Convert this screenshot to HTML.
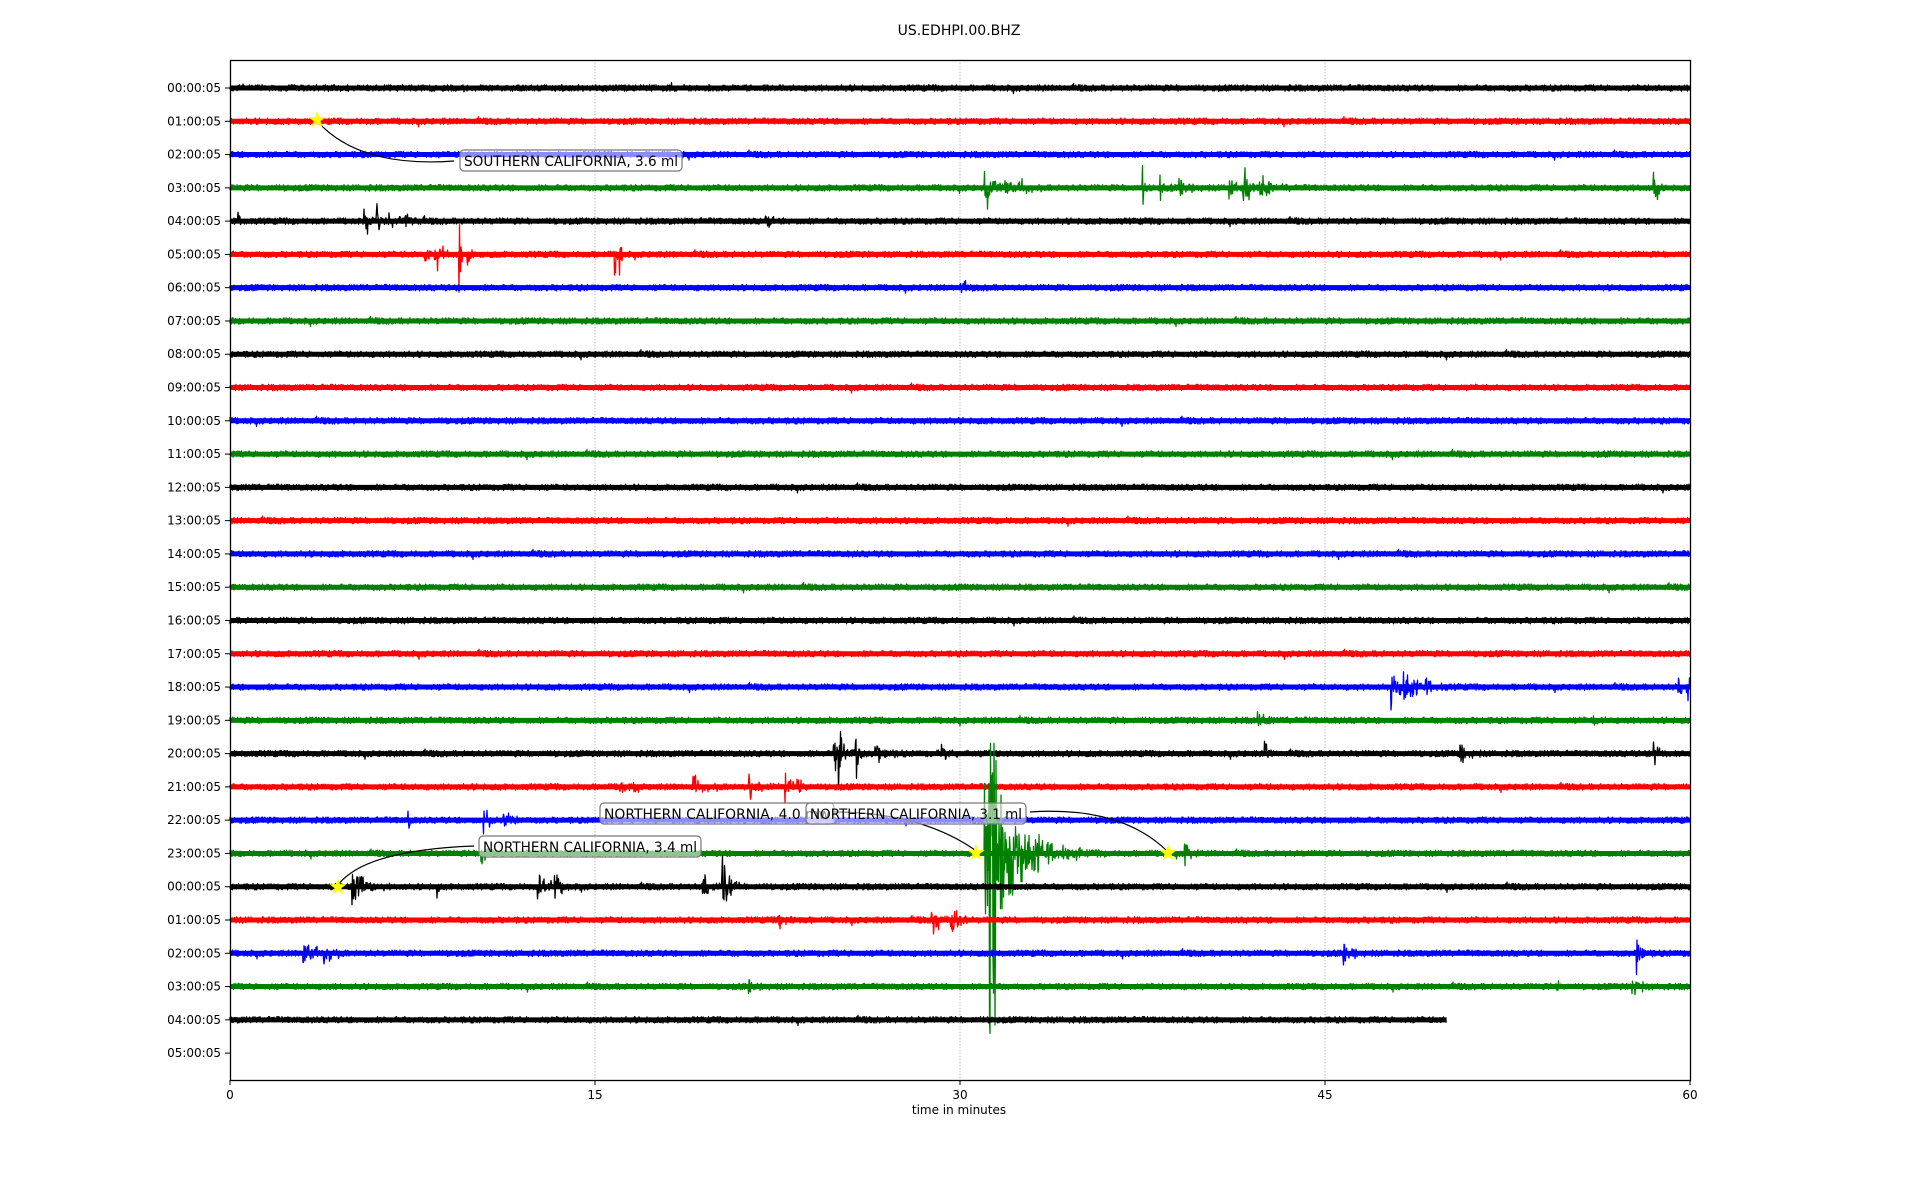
<!DOCTYPE html>
<html><head><meta charset="utf-8">
<style>
html,body{margin:0;padding:0;background:#fff;}
body{width:1920px;height:1200px;overflow:hidden;font-family:"DejaVu Sans","Liberation Sans",sans-serif;}
svg text{font-family:"DejaVu Sans","Liberation Sans",sans-serif;}
</style></head>
<body>
<svg id="s" width="1920" height="1200" xmlns="http://www.w3.org/2000/svg">
<rect width="1920" height="1200" fill="#fff"/>
<g id="grid"></g>
<g id="traces"></g>
<rect x="230.5" y="60.5" width="1460" height="1020" fill="none" stroke="#000" stroke-width="1.3"/>
<g id="labels" font-size="12" fill="#000"></g>
<text x="959" y="35" font-size="14" text-anchor="middle">US.EDHPI.00.BHZ</text>
<text x="959" y="1114" font-size="12" text-anchor="middle">time in minutes</text>
<g id="ann"></g>
</svg>
<script>
var L=230,R=1690,T=60,B=1080,W=R-L;
var y0=88,dy=33.28;
var NS="http://www.w3.org/2000/svg";
function el(tag,attrs,parent,txt){var e=document.createElementNS(NS,tag);for(var k in attrs)e.setAttribute(k,attrs[k]);if(txt!==undefined)e.textContent=txt;(parent||document.getElementById('s')).appendChild(e);return e;}
var seed=12345;function rnd(){seed=(seed*1103515245+12345)&0x7fffffff;return seed/0x7fffffff;}
function gauss(){return (rnd()+rnd()+rnd()+rnd()-2)*1.2;}
var mx=function(m){return L+m/60*W;};
var g=document.getElementById('grid');
[15,30,45].forEach(function(m){el('line',{x1:mx(m),x2:mx(m),y1:T,y2:B,stroke:'#b0b0b0','stroke-width':0.8,'stroke-dasharray':'1.5,1.5'},g);});
var lab=document.getElementById('labels');
for(var i=0;i<30;i++){var h=i%24;var y=y0+i*dy;var s=(h<10?'0':'')+h+':00:05';
el('text',{x:221,y:y+4,'text-anchor':'end'},lab,s);
el('line',{x1:225,x2:230,y1:y,y2:y,stroke:'#000','stroke-width':1},lab);}
[0,15,30,45,60].forEach(function(m){el('text',{x:mx(m),y:1099,'text-anchor':'middle'},lab,String(m));el('line',{x1:mx(m),x2:mx(m),y1:1080,y2:1085,stroke:'#000','stroke-width':1},lab);});
var ev={
3:[[31,22,0.25],[31.8,6,0.3],[32.5,5,0.3],[37.5,12,0.1],[38.2,8,0.2],[39,5,0.3],[41,10,0.2],[41.6,22,0.15],[42.3,8,0.4],[58.5,24,0.12]],
4:[[0.3,8,0.08],[5.5,6,0.3],[6,22,0.12],[6.5,6,0.4],[7.2,4,0.3],[22,4,0.3]],
5:[[8,4,0.5],[8.4,8,0.2],[9.4,30,0.08],[9.7,6,0.3],[15.8,18,0.08],[16,24,0.06]],
6:[[30,3,0.3]],
18:[[47.7,14,0.3],[48.2,10,0.4],[49,5,0.4],[59.5,6,0.4],[59.9,10,0.1]],
19:[[42.2,5,0.3],[56,4,0.2]],
20:[[24.8,10,0.4],[25,18,0.08],[25.7,20,0.1],[26.5,5,0.4],[29,3,1],[42.5,14,0.1],[50.5,5,0.3],[58.5,8,0.2]],
21:[[16,4,0.5],[19,5,0.5],[21.3,12,0.3],[22.8,8,0.2],[23.3,7,0.2]],
22:[[7.3,5,0.1],[10.4,8,0.3],[11.2,7,0.3]],
23:[[10.3,5,0.4],[39.2,10,0.3]],
24:[[5,12,0.4],[8.5,8,0.05],[12.6,10,0.3],[13.3,8,0.3],[19.4,14,0.2],[20.2,16,0.25]],
25:[[22.5,4,0.5],[28.8,7,0.4],[29.6,9,0.3]],
26:[[3,9,0.3],[3.8,8,0.3],[45.7,7,0.3],[57.8,9,0.2]],
27:[[21.3,4,0.2],[54.5,4,0.2],[57.6,4,0.4]]
};
var cols=['#000','#f00','#00f','#008000'];
var tg=document.getElementById('traces');
for(var r=0;r<29;r++){
 var yc=y0+r*dy, end=(r==28)?50:60, N=Math.round(end/60*W*2);
 var list=ev[r]||[];
 var d='M'+L+' '+yc.toFixed(1);
 for(var k=0;k<=N;k++){
  var x=L+k/2, m=(x-L)/W*60;
  var a=0;
  for(var e=0;e<list.length;e++){var t=m-list[e][0];if(t>=0&&t<list[e][2]*6){a+=1.6*list[e][1]*Math.exp(-t/list[e][2]);}}
  if(r==23){var t=m-31.0;if(t>=0){var A=t<0.6?60:60*Math.exp(-(t-0.6)/0.9);a+=A+(t<4?10*Math.exp(-t/2):0);}}
  var v=(rnd()*2-1)*3.2 + (rnd()<0.01?gauss()*3:0) + gauss()*a*0.9;
  if(r==23){var t=m-31.0;if(t>=0.2&&t<0.5){v=Math.max(-110,Math.min(180,v*2.4));} else {v=Math.max(-70,Math.min(70,v));}}
  d+=' L'+x.toFixed(1)+' '+(yc+v).toFixed(1);
 }
 el('line',{x1:L,x2:L+end/60*W,y1:yc,y2:yc,stroke:cols[r%4],'stroke-width':5},tg);
 el('path',{d:d,fill:'none',stroke:cols[r%4],'stroke-width':1.3,'stroke-linejoin':'round'},tg);
}
var an=document.getElementById('ann');
function star(cx,cy){var p='';for(var i=0;i<10;i++){var rr=i%2?3.6:9;var a=-Math.PI/2+i*Math.PI/5;p+=(cx+rr*Math.cos(a)).toFixed(1)+','+(cy+rr*Math.sin(a)).toFixed(1)+' ';}el('polygon',{points:p,fill:'#ff0'},an);}
function box(x,y,w,h,txt){el('rect',{x:x,y:y,width:w,height:h,rx:4,fill:'rgba(255,255,255,0.55)',stroke:'#777','stroke-width':1.2},an);el('text',{x:x+4,y:y+h-5,'font-size':14,fill:'#000',textLength:w-8,lengthAdjust:'spacingAndGlyphs'},an,txt);}
el('path',{d:'M318 122 Q360 168 454 161',fill:'none',stroke:'#000','stroke-width':1.2},an);
el('path',{d:'M338 885 Q365 850 474 846',fill:'none',stroke:'#000','stroke-width':1.2},an);
el('path',{d:'M834 812 Q920 812 975 850',fill:'none',stroke:'#000','stroke-width':1.2},an);
el('path',{d:'M1030 812 Q1120 806 1166 850',fill:'none',stroke:'#000','stroke-width':1.2},an);
box(460,150,222,21,'SOUTHERN CALIFORNIA, 3.6 ml');
box(479,836,222,21,'NORTHERN CALIFORNIA, 3.4 ml');
box(600,803,234,21,'NORTHERN CALIFORNIA, 4.0 mw');
box(806,803,220,21,'NORTHERN CALIFORNIA, 3.1 ml');
star(317,120);star(338,887);star(976,853);star(1168,853);
</script>
</body></html>
